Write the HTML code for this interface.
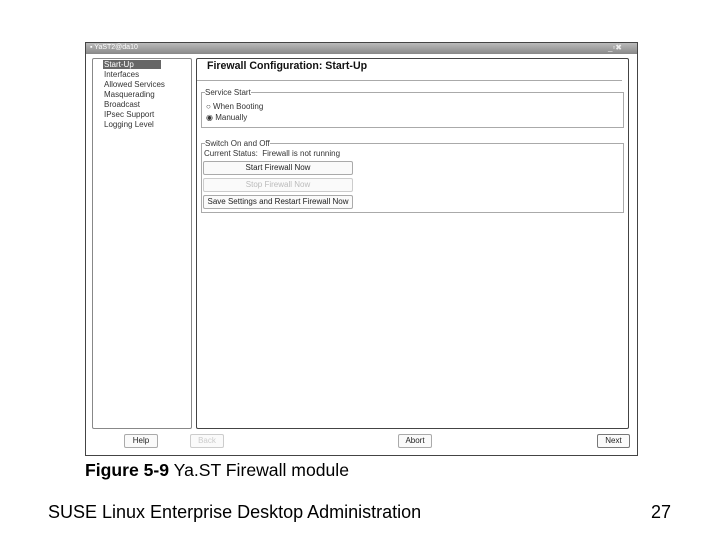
<!DOCTYPE html><html><head><style>
body{margin:0;width:720px;height:540px;background:#fff;position:relative;overflow:hidden;font-family:"Liberation Sans",sans-serif}
.a{position:absolute}
.s{font-size:8px;color:#333}
.btn{position:absolute;border:1px solid #aaa;border-radius:2px;background:#fafafa;font-size:8px;text-align:center;line-height:12px;color:#222}
</style></head><body>
<div class="a" style="left:85px;top:42px;width:551px;height:412px;border:1px solid #444;background:#fff"></div>
<div class="a" style="left:86px;top:43px;width:551px;height:11px;background:linear-gradient(#bbb,#888)"></div>
<div class="a" style="left:90px;top:44px;font-size:7px;color:#fff">▪ YaST2@da10</div>
<div class="a" style="left:608px;top:43px;font-size:8px;color:#eee">_▫✖</div>
<div class="a" style="left:92px;top:58px;width:98px;height:369px;border:1px solid #888;border-radius:2px"></div>
<div class="a" style="left:103px;top:60px;width:58px;height:9px;background:#666"></div>
<div class="a s" style="left:104px;top:60px;line-height:10px"><span style="color:#fff">Start-Up</span><br>Interfaces<br>Allowed Services<br>Masquerading<br>Broadcast<br>IPsec Support<br>Logging Level</div>
<div class="a" style="left:196px;top:58px;width:431px;height:369px;border:1px solid #444;border-radius:2px"></div>
<div class="a" style="left:207px;top:60px;font-size:10.6px;font-weight:bold;color:#111">Firewall Configuration: Start-Up</div>
<div class="a" style="left:197px;top:80px;width:425px;height:1px;background:#aaa"></div>
<div class="a" style="left:201px;top:92px;width:421px;height:34px;border:1px solid #aaa"></div>
<div class="a s" style="left:205px;top:88px;background:#fff">Service Start</div>
<div class="a s" style="left:206px;top:101px;line-height:11px">○ When Booting<br>◉ Manually</div>
<div class="a" style="left:201px;top:143px;width:421px;height:68px;border:1px solid #aaa"></div>
<div class="a s" style="left:205px;top:139px;background:#fff">Switch On and Off</div>
<div class="a s" style="left:204px;top:149px">Current Status:&nbsp; Firewall is not running</div>
<div class="btn" style="left:203px;top:161px;width:148px;height:12px">Start Firewall Now</div>
<div class="btn" style="left:203px;top:178px;width:148px;height:12px;color:#bbb;border-color:#ccc">Stop Firewall Now</div>
<div class="btn" style="left:203px;top:195px;width:148px;height:12px">Save Settings and Restart Firewall Now</div>
<div class="btn" style="left:124px;top:434px;width:32px;height:12px">Help</div>
<div class="btn" style="left:190px;top:434px;width:32px;height:12px;color:#ccc;border-color:#ccc">Back</div>
<div class="btn" style="left:398px;top:434px;width:32px;height:12px">Abort</div>
<div class="btn" style="left:597px;top:434px;width:31px;height:12px;border-color:#777">Next</div>
<div class="a" style="left:85px;top:460px;font-size:17.6px;color:#000"><b>Figure 5-9</b> Ya.ST Firewall module</div>
<div class="a" style="left:48px;top:502px;font-size:18px;color:#000">SUSE Linux Enterprise Desktop Administration</div>
<div class="a" style="left:651px;top:502px;font-size:18px;color:#000">27</div>
</body></html>
